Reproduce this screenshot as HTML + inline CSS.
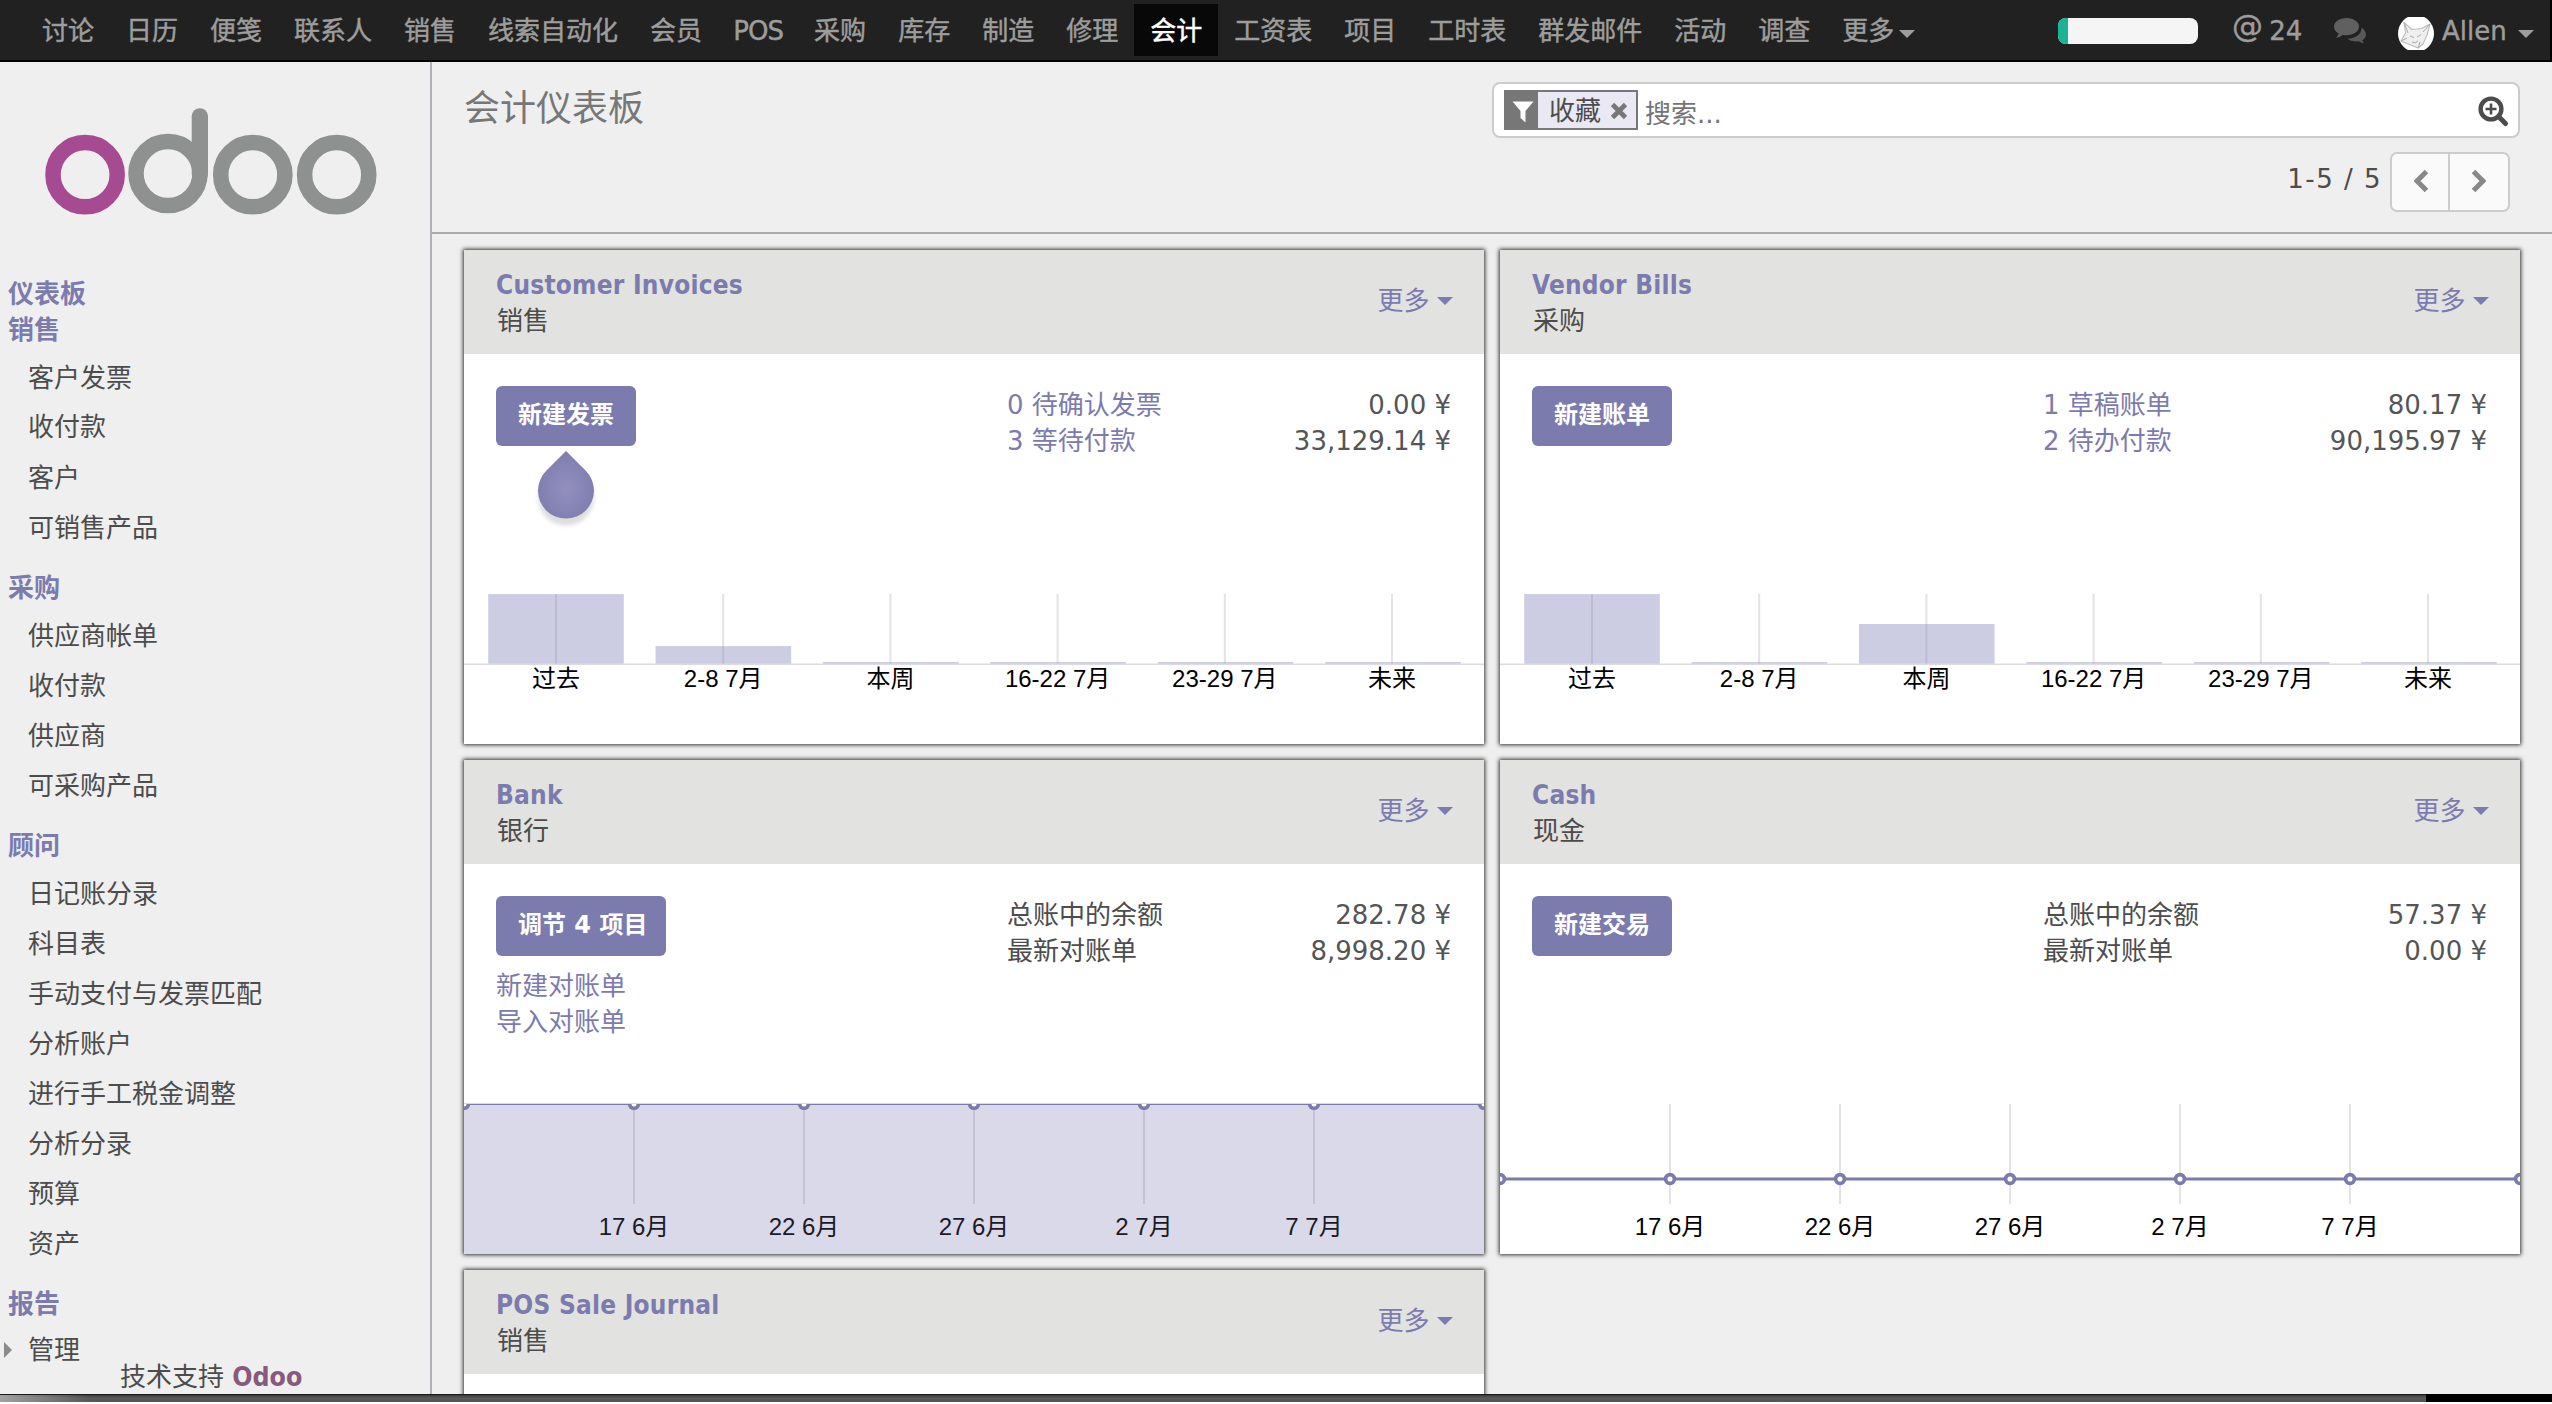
<!DOCTYPE html>
<html lang="zh-CN">
<head>
<meta charset="utf-8">
<title>会计仪表板 - Odoo</title>
<style>
*{box-sizing:border-box;margin:0;padding:0}
html,body{width:2552px;height:1404px;overflow:hidden;background:#efefef}
body{position:relative;font-family:"DejaVu Sans","Liberation Sans","Noto Sans CJK SC",sans-serif;font-size:26px;color:#4c4c4c}
/* NAVBAR */
#nav{position:absolute;left:0;top:0;width:2552px;height:62px;background:#212121;border-bottom:2px solid #000}
#nav .menu{position:absolute;left:26px;top:0;height:60px;display:flex}
#nav .menu a{-webkit-text-stroke:0.450px;display:block;height:60px;padding:0 16px;line-height:63px;color:#9d9d9d;font-size:26px;white-space:nowrap}
#nav .menu a.active{background:#080808;color:#fff;height:52px;margin-top:4px;line-height:55px}

#nav .menu a.pos{width:80px;padding:0;text-align:center;letter-spacing:-1px}
#nav .menu a.more{position:relative;padding-right:0}
.caret{display:inline-block;width:0;height:0;border-left:8px solid transparent;border-right:8px solid transparent;border-top:8px solid #9d9d9d;vertical-align:middle}
#nav .menu a.more .caret{position:absolute;left:73px;top:30px}
#nav .prog{position:absolute;left:2058px;top:18px;width:140px;height:26px;border-radius:8px;background:#f5f5f5;overflow:hidden}
#nav .prog b{display:block;width:10px;height:26px;background:#1ab394}
#nav .at .a{display:inline-block;font-size:31px;line-height:36px;position:relative;top:-5px;margin-right:-2px;vertical-align:top}
#nav .at,#nav .user{-webkit-text-stroke:0.400px}
#nav .at{position:absolute;left:2232px;top:13px;font-size:26px;line-height:36px;color:#9d9d9d;white-space:nowrap}
#nav .chat{position:absolute;left:2334px;top:18px}
#nav .avatar{position:absolute;left:2398px;top:17px;width:36px;height:33px;overflow:hidden}
#nav .avatar:before{content:"";position:absolute;left:0;top:-2px;width:36px;height:37px;border-radius:50%;background:#fff}
#nav .avatar svg{position:absolute;left:0;top:0}
#nav .user{position:absolute;left:2442px;top:13px;font-size:26px;line-height:36px;color:#9d9d9d;white-space:nowrap}
#nav .ucaret{position:absolute;left:2518px;top:30px}
#nav .redge{position:absolute;left:2550px;top:0;width:2px;height:62px;background:#000}
/* SIDEBAR */
#side{position:absolute;left:0;top:62px;width:432px;height:1332px;border-right:2px solid #afafb6;background:#efefef;overflow:hidden}
#side .h{position:absolute;left:8px;font-weight:bold;color:#7c7bad;font-size:26px;line-height:36px;white-space:nowrap}
#side .i{position:absolute;left:28px;color:#4c4c4c;font-size:26px;line-height:36px;white-space:nowrap}
/* MAIN */
#cp{position:absolute;left:432px;top:62px;width:2120px;height:172px;border-bottom:2px solid #aaa;background:#efefef}

#cp .title{position:absolute;left:32px;top:22px;font-size:36px;line-height:50px;color:#777;white-space:nowrap}
#cp .search{position:absolute;left:1060px;top:20px;width:1028px;height:56px;border:2px solid #ccc;border-radius:8px;background:#fff}
#cp .facet{position:absolute;left:10px;top:6px;width:134px;height:40px;border:2px solid #777;background:#e9e8f3}
#cp .facet .fi{position:absolute;left:0;top:0;width:32px;height:36px;background:#777}
#cp .facet .fi svg{position:absolute;left:6px;top:9px}
#cp .facet .fv{position:absolute;left:43px;top:1px;font-size:26px;line-height:36px;color:#4c4c4c;white-space:nowrap}
#cp .facet .fx{position:absolute;left:104px;top:10px}
#cp .ph{position:absolute;left:151px;top:12px;font-size:26px;line-height:36px;color:#757575;white-space:nowrap}
#cp .splus{position:absolute;left:984px;top:12px}
#cp .pgt{position:absolute;right:170px;top:99px;letter-spacing:1.500px;font-size:26px;line-height:36px;color:#4c4c4c;white-space:nowrap}
#cp .pgb{position:absolute;left:1958px;top:90px;width:120px;height:60px;border:2px solid #ccc;border-radius:7px;background:#fbfafa}
#cp .pgb i{position:absolute;left:56px;top:0;width:2px;height:56px;background:#ccc}
#cp .pgb .cl{position:absolute;left:22px;top:15px}
#cp .pgb .cr{position:absolute;left:78px;top:15px}
.card{position:absolute;width:1020px;height:494px;background:#fff;box-shadow:0 0 4px 1px rgba(0,0,0,.8);overflow:hidden}
.card .hd{position:absolute;left:0;top:0;width:100%;height:104px;background:#e2e2e0}
.card .t{position:absolute;left:32px;top:17px;font-family:"DejaVu Sans Condensed","Liberation Sans","Noto Sans CJK SC",sans-serif;font-size:26px;font-weight:bold;letter-spacing:.220px;color:#7c7bad;line-height:36px;white-space:nowrap}
.card .s{position:absolute;left:33px;top:53px;font-size:26px;color:#4c4c4c;line-height:36px;white-space:nowrap}
.card .more{position:absolute;right:31px;top:33px;font-size:26px;color:#7c7bad;line-height:36px;white-space:nowrap}
.btn{position:absolute;left:32px;top:136px;height:60px;border-radius:6px;background:#7c7bad;color:#fff;font-weight:bold;font-size:24px;line-height:58px;padding:0 22px;white-space:nowrap}
.lk{position:absolute;font-size:26px;line-height:36px;color:#7c7bad;white-space:nowrap}
.tx{position:absolute;font-size:26px;line-height:36px;color:#4c4c4c;white-space:nowrap}
.am{position:absolute;right:33px;font-size:26px;line-height:36px;color:#555;white-space:nowrap;text-align:right}
.ax{position:absolute;font-family:"Liberation Sans","Noto Sans CJK SC",sans-serif;font-size:24px;line-height:30px;color:#000;white-space:nowrap;transform:translateX(-50%)}

.caret.mc{border-top-color:#7c7bad;margin-left:7.500px;position:relative;top:-2px}
#bot{position:absolute;left:0;top:1394px;width:2552px;height:10px;background:#fff}
#bot .l1{position:absolute;left:0;top:0;width:2552px;height:1.500px;background:#1a1a1a}
#bot .l2{position:absolute;left:0;top:1px;width:2552px;height:7px;background:linear-gradient(#3a3a3a,#585858 40%,#555)}
#bot .l3{position:absolute;left:0;top:1px;width:90px;height:7px;background:linear-gradient(90deg,rgba(170,170,170,.9),rgba(120,120,120,0))}
#bot .l4{position:absolute;left:2426px;top:0;width:126px;height:8px;background:#000}
</style>
</head>
<body>
<!-- NAV -->
<div id="nav">
  <div class="menu"><a>讨论</a><a>日历</a><a>便笺</a><a>联系人</a><a>销售</a><a>线索自动化</a><a>会员</a><a class="pos">POS</a><a>采购</a><a>库存</a><a>制造</a><a>修理</a><a class="active">会计</a><a>工资表</a><a>项目</a><a>工时表</a><a>群发邮件</a><a>活动</a><a>调查</a><a class="more">更多<i class="caret"></i></a></div>
  <div class="prog"><b></b></div>
  <div class="at"><span class="a">@</span> 24</div>
  <svg class="chat" viewBox="0 0 32 25" width="32" height="25"><path d="M12.5 0C5.6 0 0 3.9 0 8.8c0 2.8 1.8 5.2 4.7 6.8-.4 1.5-1.3 2.9-2.6 4 2.6-.2 4.9-1.200 6.600-2.700 1.200.3 2.500.4 3.800.4 6.900 0 12.500-3.900 12.500-8.800S19.400 0 12.500 0z" fill="#606060"/><path d="M27.600 9.500c0 .2 0 .5 0 .7 0 5.600-6.200 10.200-14 10.600 2.100 1.700 5.200 2.700 8.700 2.700.9 0 1.800-.1 2.600-.2 1.500 1.200 3.400 1.900 5.500 2.100-1-.9-1.700-2-2-3.200 2.200-1.300 3.600-3.200 3.600-5.400 0-2.900-1.700-5.500-4.400-7.300z" fill="#585858"/></svg>
  <div class="avatar"><svg viewBox="0 0 36 33" width="36" height="33"><path d="M6 5.500L14 12.500 23.500 11.500 32 7 29 18 25 27 20 31 11.500 27.500 3 24 7.500 16Z" fill="#efefef" stroke="#bcbcbc" stroke-width="1.100" stroke-linejoin="round"/><path d="M6 5.500L10 16M32 7L25 15M12 19l4 1.500M19 20l4-2.500M3 24l6-3M14 25l3 1 3-2M20 31l2-6" fill="none" stroke="#aaa" stroke-width="1"/></svg></div>
  <div class="user">Allen</div>
  <i class="caret ucaret"></i>
  <div class="redge"></div>
</div>
<!-- SIDEBAR -->
<div id="side">
<svg class="logo" style="position:absolute;left:30px;top:28px;filter:blur(.7px)" width="370" height="140" viewBox="30 90 370 140"><g fill="none" stroke-width="15.5"><circle cx="85.1" cy="174.7" r="32.1" stroke="#a64a91"/><circle cx="168" cy="173.6" r="32" stroke="#8f9190"/><circle cx="252.8" cy="174.7" r="32.1" stroke="#8f9190"/><circle cx="336.7" cy="174.7" r="32.1" stroke="#8f9190"/><path d="M199.85 116.3V174" stroke="#8f9190" stroke-width="16.3" stroke-linecap="round"/></g></svg>
<div class="h" style="top:213.6px">仪表板</div>
<div class="h" style="top:249.7px">销售</div>
<div class="i" style="top:297.6px">客户发票</div>
<div class="i" style="top:347.4px">收付款</div>
<div class="i" style="top:397.5px">客户</div>
<div class="i" style="top:447.7px">可销售产品</div>
<div class="h" style="top:508px">采购</div>
<div class="i" style="top:556px">供应商帐单</div>
<div class="i" style="top:606px">收付款</div>
<div class="i" style="top:656px">供应商</div>
<div class="i" style="top:706px">可采购产品</div>
<div class="h" style="top:766px">顾问</div>
<div class="i" style="top:814px">日记账分录</div>
<div class="i" style="top:864px">科目表</div>
<div class="i" style="top:914px">手动支付与发票匹配</div>
<div class="i" style="top:964px">分析账户</div>
<div class="i" style="top:1014px">进行手工税金调整</div>
<div class="i" style="top:1064px">分析分录</div>
<div class="i" style="top:1114px">预算</div>
<div class="i" style="top:1164px">资产</div>
<div class="h" style="top:1224px">报告</div>
<i class="tri" style="position:absolute;left:4px;top:1280px;border-top:8px solid transparent;border-bottom:8px solid transparent;border-left:8px solid #8a8a8a;width:0;height:0"></i>
<div class="i" style="top:1270px">管理</div>
<div class="foot" style="position:absolute;left:120px;top:1297px;font-size:26px;line-height:36px;white-space:nowrap;color:#4c4c4c">技术支持 <b style="color:#875a7b;font-family:'DejaVu Sans Condensed','Liberation Sans',sans-serif;font-size:26.500px">Odoo</b></div>
</div>
<!-- CONTROL PANEL -->
<div id="cp">
  <div class="title">会计仪表板</div>
  <div class="search">
    <div class="facet"><span class="fi"><svg width="22" height="22" viewBox="0 0 22 22"><path d="M0.500 0.500h21l-8 9.500v11.500l-5-4.500v-7z" fill="#fff"/></svg></span><span class="fv">收藏</span><svg class="fx" width="18" height="18" viewBox="0 0 18 18"><path d="M2.500 2.500l13 13M15.500 2.500l-13 13" stroke="#777" stroke-width="4.600" fill="none"/></svg></div>
    <div class="ph">搜索...</div>
    <svg class="splus" width="32" height="32" viewBox="0 0 32 32"><circle cx="13" cy="13" r="10.400" fill="none" stroke="#4c4c4c" stroke-width="4.400"/><path d="M20.500 20.500l7 7" stroke="#4c4c4c" stroke-width="5" stroke-linecap="round"/><path d="M7.500 13h11M13 7.500v11" stroke="#4c4c4c" stroke-width="2.600"/></svg>
  </div>
  <div class="pgt">1-5 / 5</div>
  <div class="pgb"><i></i><svg class="cl" width="16" height="24" viewBox="0 0 16 24"><path d="M12.500 2.500l-9.500 9.500 9.500 9.500" fill="none" stroke="#888" stroke-width="5"/></svg><svg class="cr" width="16" height="24" viewBox="0 0 16 24"><path d="M3.500 2.500l9.500 9.500-9.500 9.500" fill="none" stroke="#888" stroke-width="5"/></svg></div>
</div>
<!-- CARDS -->
<div class="card" style="left:464px;top:250px;height:494px"><div class="hd"></div><div class="t">Customer Invoices</div><div class="s">销售</div><div class="more">更多<i class="caret mc"></i></div><div class="btn" style="width:140px">新建发票</div><div class="lk" style="left:543px;top:137px">0 待确认发票</div><div class="am" style="top:137px">0.00 ¥</div><div class="lk" style="left:543px;top:173px">3 等待付款</div><div class="am" style="top:173px">33,129.14 ¥</div><svg class="drop" width="80" height="90" viewBox="0 0 80 90" style="position:absolute;left:62px;top:193px"><defs><radialGradient id="dg" cx="50%" cy="55%" r="60%"><stop offset="0" stop-color="#9390bf"/><stop offset="1" stop-color="#7c7bad"/></radialGradient><filter id="ds" x="-30%" y="-30%" width="160%" height="170%"><feGaussianBlur stdDeviation="2.200"/></filter></defs><path d="M40 12L59.800 31.800A28 28 0 1 1 20.200 31.800Z" fill="#000" opacity=".13" filter="url(#ds)" transform="translate(0,3)"/><path d="M40 8L59.800 27.800A28 28 0 1 1 20.200 27.800Z" fill="url(#dg)"/></svg><svg class="ch" width="1020" height="494" viewBox="0 0 1020 494" style="position:absolute;left:0;top:0"><rect x="91.0" y="344" width="2" height="70" fill="#e3e3e3"/><rect x="258.2" y="344" width="2" height="70" fill="#e3e3e3"/><rect x="425.4" y="344" width="2" height="70" fill="#e3e3e3"/><rect x="592.6" y="344" width="2" height="70" fill="#e3e3e3"/><rect x="759.8" y="344" width="2" height="70" fill="#e3e3e3"/><rect x="927.0" y="344" width="2" height="70" fill="#e3e3e3"/><rect x="0" y="413.500" width="1020" height="1.600" fill="#dcdcdc"/><rect x="24.2" y="344.1" width="135.600" height="69.4" fill="#7f7fb9" fill-opacity="0.400"/><rect x="191.6" y="396.1" width="135.600" height="17.4" fill="#7f7fb9" fill-opacity="0.400"/><rect x="359.0" y="412.0" width="135.600" height="1.5" fill="#7f7fb9" fill-opacity="0.400"/><rect x="526.4" y="412.0" width="135.600" height="1.5" fill="#7f7fb9" fill-opacity="0.400"/><rect x="693.8" y="412.0" width="135.600" height="1.5" fill="#7f7fb9" fill-opacity="0.400"/><rect x="861.2" y="412.0" width="135.600" height="1.5" fill="#7f7fb9" fill-opacity="0.400"/></svg><div class="ax" style="left:92.0px;top:414px">过去</div><div class="ax" style="left:259.2px;top:414px">2-8 7月</div><div class="ax" style="left:426.4px;top:414px">本周</div><div class="ax" style="left:593.6px;top:414px">16-22 7月</div><div class="ax" style="left:760.8px;top:414px">23-29 7月</div><div class="ax" style="left:928.0px;top:414px">未来</div></div>
<div class="card" style="left:1500px;top:250px;height:494px"><div class="hd"></div><div class="t">Vendor Bills</div><div class="s">采购</div><div class="more">更多<i class="caret mc"></i></div><div class="btn" style="width:140px">新建账单</div><div class="lk" style="left:543px;top:137px">1 草稿账单</div><div class="am" style="top:137px">80.17 ¥</div><div class="lk" style="left:543px;top:173px">2 待办付款</div><div class="am" style="top:173px">90,195.97 ¥</div><svg class="ch" width="1020" height="494" viewBox="0 0 1020 494" style="position:absolute;left:0;top:0"><rect x="91.0" y="344" width="2" height="70" fill="#e3e3e3"/><rect x="258.2" y="344" width="2" height="70" fill="#e3e3e3"/><rect x="425.4" y="344" width="2" height="70" fill="#e3e3e3"/><rect x="592.6" y="344" width="2" height="70" fill="#e3e3e3"/><rect x="759.8" y="344" width="2" height="70" fill="#e3e3e3"/><rect x="927.0" y="344" width="2" height="70" fill="#e3e3e3"/><rect x="0" y="413.500" width="1020" height="1.600" fill="#dcdcdc"/><rect x="24.2" y="344.1" width="135.600" height="69.4" fill="#7f7fb9" fill-opacity="0.400"/><rect x="191.6" y="412.0" width="135.600" height="1.5" fill="#7f7fb9" fill-opacity="0.400"/><rect x="359.0" y="374.0" width="135.600" height="39.5" fill="#7f7fb9" fill-opacity="0.400"/><rect x="526.4" y="412.0" width="135.600" height="1.5" fill="#7f7fb9" fill-opacity="0.400"/><rect x="693.8" y="412.0" width="135.600" height="1.5" fill="#7f7fb9" fill-opacity="0.400"/><rect x="861.2" y="412.0" width="135.600" height="1.5" fill="#7f7fb9" fill-opacity="0.400"/></svg><div class="ax" style="left:92.0px;top:414px">过去</div><div class="ax" style="left:259.2px;top:414px">2-8 7月</div><div class="ax" style="left:426.4px;top:414px">本周</div><div class="ax" style="left:593.6px;top:414px">16-22 7月</div><div class="ax" style="left:760.8px;top:414px">23-29 7月</div><div class="ax" style="left:928.0px;top:414px">未来</div></div>
<div class="card" style="left:464px;top:760px;height:494px"><div class="hd"></div><div class="t">Bank</div><div class="s">银行</div><div class="more">更多<i class="caret mc"></i></div><div class="btn" style="width:170px">调节 4 项目</div><div class="tx" style="left:543px;top:137px">总账中的余额</div><div class="am" style="top:137px">282.78 ¥</div><div class="tx" style="left:543px;top:173px">最新对账单</div><div class="am" style="top:173px">8,998.20 ¥</div><div class="lk" style="left:32px;top:208px">新建对账单</div><div class="lk" style="left:32px;top:244px">导入对账单</div><svg class="ch" width="1020" height="494" viewBox="0 0 1020 494" style="position:absolute;left:0;top:0"><rect x="0" y="344" width="1020" height="150" fill="#dad9e9"/><rect x="169" y="344" width="2" height="100" fill="#c4c3d6"/><rect x="339" y="344" width="2" height="100" fill="#c4c3d6"/><rect x="509" y="344" width="2" height="100" fill="#c4c3d6"/><rect x="679" y="344" width="2" height="100" fill="#c4c3d6"/><rect x="849" y="344" width="2" height="100" fill="#c4c3d6"/><g clip-path="inset(0)"><rect x="0" y="343.400" width="1020" height="1.600" fill="#7c7bad"/><path d="M-6.25 344a6.250 6.250 0 0 0 12.500 0z" fill="#7c7bad"/><path d="M-2.5 344a2.500 2.500 0 0 0 5 0z" fill="#fff"/><path d="M163.75 344a6.250 6.250 0 0 0 12.500 0z" fill="#7c7bad"/><path d="M167.5 344a2.500 2.500 0 0 0 5 0z" fill="#fff"/><path d="M333.75 344a6.250 6.250 0 0 0 12.500 0z" fill="#7c7bad"/><path d="M337.5 344a2.500 2.500 0 0 0 5 0z" fill="#fff"/><path d="M503.75 344a6.250 6.250 0 0 0 12.500 0z" fill="#7c7bad"/><path d="M507.5 344a2.500 2.500 0 0 0 5 0z" fill="#fff"/><path d="M673.75 344a6.250 6.250 0 0 0 12.500 0z" fill="#7c7bad"/><path d="M677.5 344a2.500 2.500 0 0 0 5 0z" fill="#fff"/><path d="M843.75 344a6.250 6.250 0 0 0 12.500 0z" fill="#7c7bad"/><path d="M847.5 344a2.500 2.500 0 0 0 5 0z" fill="#fff"/><path d="M1013.75 344a6.250 6.250 0 0 0 12.500 0z" fill="#7c7bad"/><path d="M1017.5 344a2.500 2.500 0 0 0 5 0z" fill="#fff"/></g></svg><div class="ax" style="left:170px;top:452px;color:#1a1a28">17 6月</div><div class="ax" style="left:340px;top:452px;color:#1a1a28">22 6月</div><div class="ax" style="left:510px;top:452px;color:#1a1a28">27 6月</div><div class="ax" style="left:680px;top:452px;color:#1a1a28">2 7月</div><div class="ax" style="left:850px;top:452px;color:#1a1a28">7 7月</div></div>
<div class="card" style="left:1500px;top:760px;height:494px"><div class="hd"></div><div class="t">Cash</div><div class="s">现金</div><div class="more">更多<i class="caret mc"></i></div><div class="btn" style="width:140px">新建交易</div><div class="tx" style="left:543px;top:137px">总账中的余额</div><div class="am" style="top:137px">57.37 ¥</div><div class="tx" style="left:543px;top:173px">最新对账单</div><div class="am" style="top:173px">0.00 ¥</div><svg class="ch" width="1020" height="494" viewBox="0 0 1020 494" style="position:absolute;left:0;top:0"><rect x="169" y="344" width="2" height="100" fill="#e3e3e3"/><rect x="339" y="344" width="2" height="100" fill="#e3e3e3"/><rect x="509" y="344" width="2" height="100" fill="#e3e3e3"/><rect x="679" y="344" width="2" height="100" fill="#e3e3e3"/><rect x="849" y="344" width="2" height="100" fill="#e3e3e3"/><rect x="0" y="417.500" width="1020" height="3" fill="#7c7bad"/><circle cx="0" cy="419" r="4.400" fill="#fff" stroke="#7c7bad" stroke-width="3.700"/><circle cx="170" cy="419" r="4.400" fill="#fff" stroke="#7c7bad" stroke-width="3.700"/><circle cx="340" cy="419" r="4.400" fill="#fff" stroke="#7c7bad" stroke-width="3.700"/><circle cx="510" cy="419" r="4.400" fill="#fff" stroke="#7c7bad" stroke-width="3.700"/><circle cx="680" cy="419" r="4.400" fill="#fff" stroke="#7c7bad" stroke-width="3.700"/><circle cx="850" cy="419" r="4.400" fill="#fff" stroke="#7c7bad" stroke-width="3.700"/><circle cx="1020" cy="419" r="4.400" fill="#fff" stroke="#7c7bad" stroke-width="3.700"/></svg><div class="ax" style="left:170px;top:452px;color:#000">17 6月</div><div class="ax" style="left:340px;top:452px;color:#000">22 6月</div><div class="ax" style="left:510px;top:452px;color:#000">27 6月</div><div class="ax" style="left:680px;top:452px;color:#000">2 7月</div><div class="ax" style="left:850px;top:452px;color:#000">7 7月</div></div>
<div class="card" style="left:464px;top:1270px;height:200px"><div class="hd"></div><div class="t">POS Sale Journal</div><div class="s">销售</div><div class="more">更多<i class="caret mc"></i></div></div>
<!-- BOTTOM -->
<div id="bot"><div class="l1"></div><div class="l2"></div><div class="l3"></div><div class="l4"></div></div>
</body>
</html>
